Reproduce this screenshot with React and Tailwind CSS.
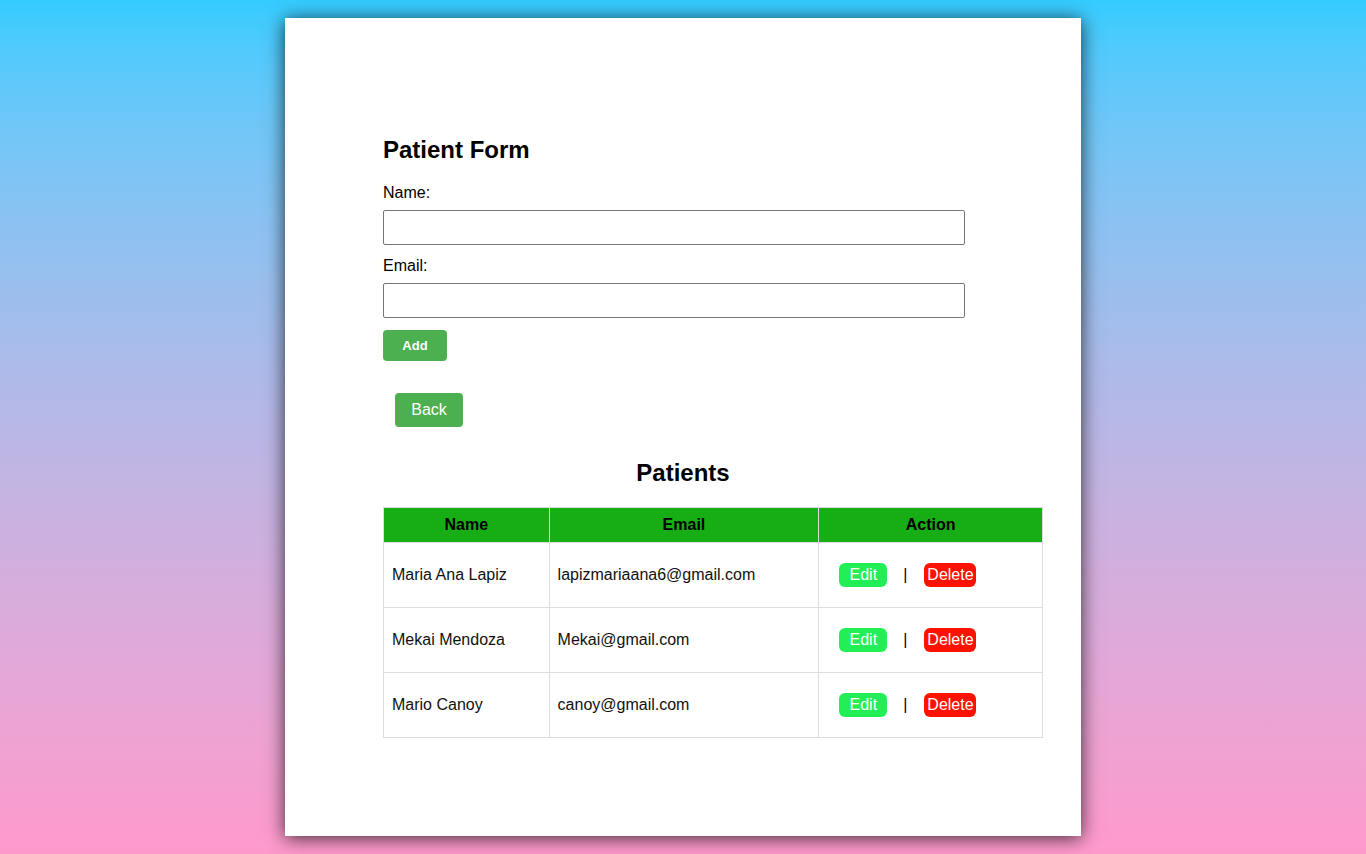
const patients = [
  { name: "Maria Ana Lapiz", email: "lapizmariaana6@gmail.com" },
  { name: "Mekai Mendoza", email: "Mekai@gmail.com" },
  { name: "Mario Canoy", email: "canoy@gmail.com" },
];

const App = () => {
  return (
    <div className="min-h-[854px] bg-gradient-to-b from-[#33ccff] to-[#ff99cc] pt-[18px] pb-[18px] font-['Liberation_Sans',Arial,sans-serif] text-black">
      <div className="mx-auto w-[796px] h-[818px] bg-white shadow-[0_2px_18px_rgba(0,0,0,0.75)] pl-[98px] pt-[118px]">
        <h2 className="text-[24px] leading-[28px] font-bold">Patient Form</h2>

        <div className="mt-[20px] text-[16px] leading-[18px]">Name:</div>
        <input
          type="text"
          className="mt-[8px] block w-[582px] h-[35px] border border-[#767676] rounded-[2px] outline-none"
        />

        <div className="mt-[12px] text-[16px] leading-[18px]">Email:</div>
        <input
          type="email"
          className="mt-[8px] block w-[582px] h-[35px] border border-[#767676] rounded-[2px] outline-none"
        />

        <button className="mt-[12px] block w-[64px] h-[31px] bg-[#4caf50] rounded-[4px] text-white text-[13px] font-bold">
          Add
        </button>

        <button className="mt-[32px] ml-[12px] block w-[68px] h-[34px] bg-[#4caf50] rounded-[4px] text-white text-[16px]">
          Back
        </button>

        <h2 className="mt-[32px] w-[600px] text-center text-[24px] leading-[28px] font-bold">
          Patients
        </h2>

        <table className="mt-[20px] w-[660px] border-collapse text-[16px]">
          <thead>
            <tr className="bg-[#17ad14] h-[35px]">
              <th className="w-[166px] border border-[#dddddd] font-bold">Name</th>
              <th className="w-[270px] border border-[#dddddd] font-bold">Email</th>
              <th className="w-[224px] border border-[#dddddd] font-bold">Action</th>
            </tr>
          </thead>
          <tbody>
            {patients.map((p) => (
              <tr key={p.email} className="h-[65px]">
                <td className="border border-[#dddddd] px-[8px] text-[#111]">{p.name}</td>
                <td className="border border-[#dddddd] px-[8px] text-[#111]">{p.email}</td>
                <td className="border border-[#dddddd] pl-[20px]">
                  <div className="flex items-center">
                    <button className="w-[48px] h-[24px] bg-[#22ee55] rounded-[6px] text-white text-[16px] leading-[24px]">
                      Edit
                    </button>
                    <span className="ml-[16px] mr-[17px]">|</span>
                    <button className="w-[52px] h-[24px] bg-[#ff1100] rounded-[6px] text-white text-[16px] leading-[24px]">
                      Delete
                    </button>
                  </div>
                </td>
              </tr>
            ))}
          </tbody>
        </table>
      </div>
    </div>
  );
};

export default App;
